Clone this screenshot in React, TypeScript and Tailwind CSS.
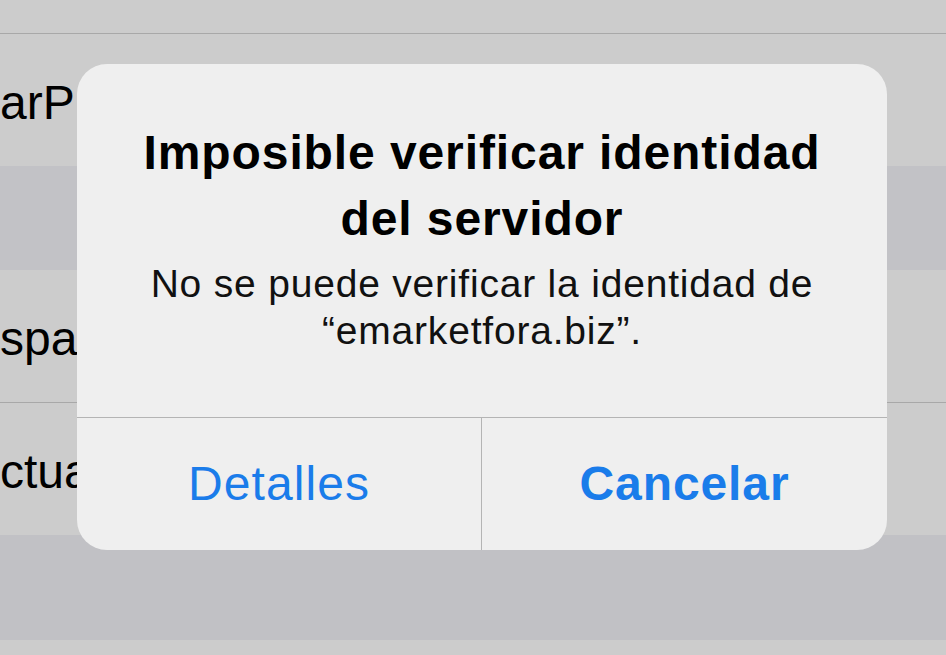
import type { ReactNode } from "react";

const font = { fontFamily: '"Liberation Sans", Arial, sans-serif' };

function Row({ children, border, height }: { children?: ReactNode; border?: boolean; height: string }) {
  return (
    <div className={`flex items-center bg-[#cccccc] pt-[6px] text-[48px] text-black ${height} ${border ? "border-b border-[#a8a8a8]" : ""}`}>
      <span className="block w-[77px] overflow-hidden whitespace-nowrap">{children}</span>
    </div>
  );
}

export default function App() {
  return (
    <main className="relative h-[655px] w-[946px] overflow-hidden bg-[#cccccc]" style={font}>
      {/* settings list behind the alert */}
      <div className="flex flex-col">
        <Row height="h-[34px]" border />
        <Row height="h-[132px]">arPlay</Row>
        <div className="h-[104px] bg-[#c2c2c6]" />
        <Row height="h-[133px]" border>spacio</Row>
        <Row height="h-[132px]">ctualización</Row>
        <div className="h-[105px] bg-[#c1c1c5]" />
        <Row height="h-[20px]" />
      </div>

      {/* alert */}
      <div className="absolute left-[77px] top-[64px] flex h-[486px] w-[810px] flex-col overflow-hidden rounded-[30px] bg-[#efefef]">
        <div className="flex h-[353px] flex-col items-center pt-[56px] text-center">
          <h1 className="text-[48px] font-bold leading-[66px] tracking-[0.9px] text-black">
            Imposible verificar identidad
            <br />
            del servidor
          </h1>
          <p className="mt-[8px] text-[39px] leading-[47px] tracking-[0.8px] text-[#111111]">
            No se puede verificar la identidad de
            <br />
            “emarketfora.biz”.
          </p>
        </div>
        <div className="grid h-[133px] grid-cols-2 border-t border-[#b4b4b4]">
          <button className="flex items-center justify-center border-r border-[#b4b4b4] text-[48px] tracking-[1.1px] text-[#1a7cea]" type="button">
            Detalles
          </button>
          <button className="flex items-center justify-center text-[48px] font-bold tracking-[0.9px] text-[#1a7cea]" type="button">
            Cancelar
          </button>
        </div>
      </div>
    </main>
  );
}
